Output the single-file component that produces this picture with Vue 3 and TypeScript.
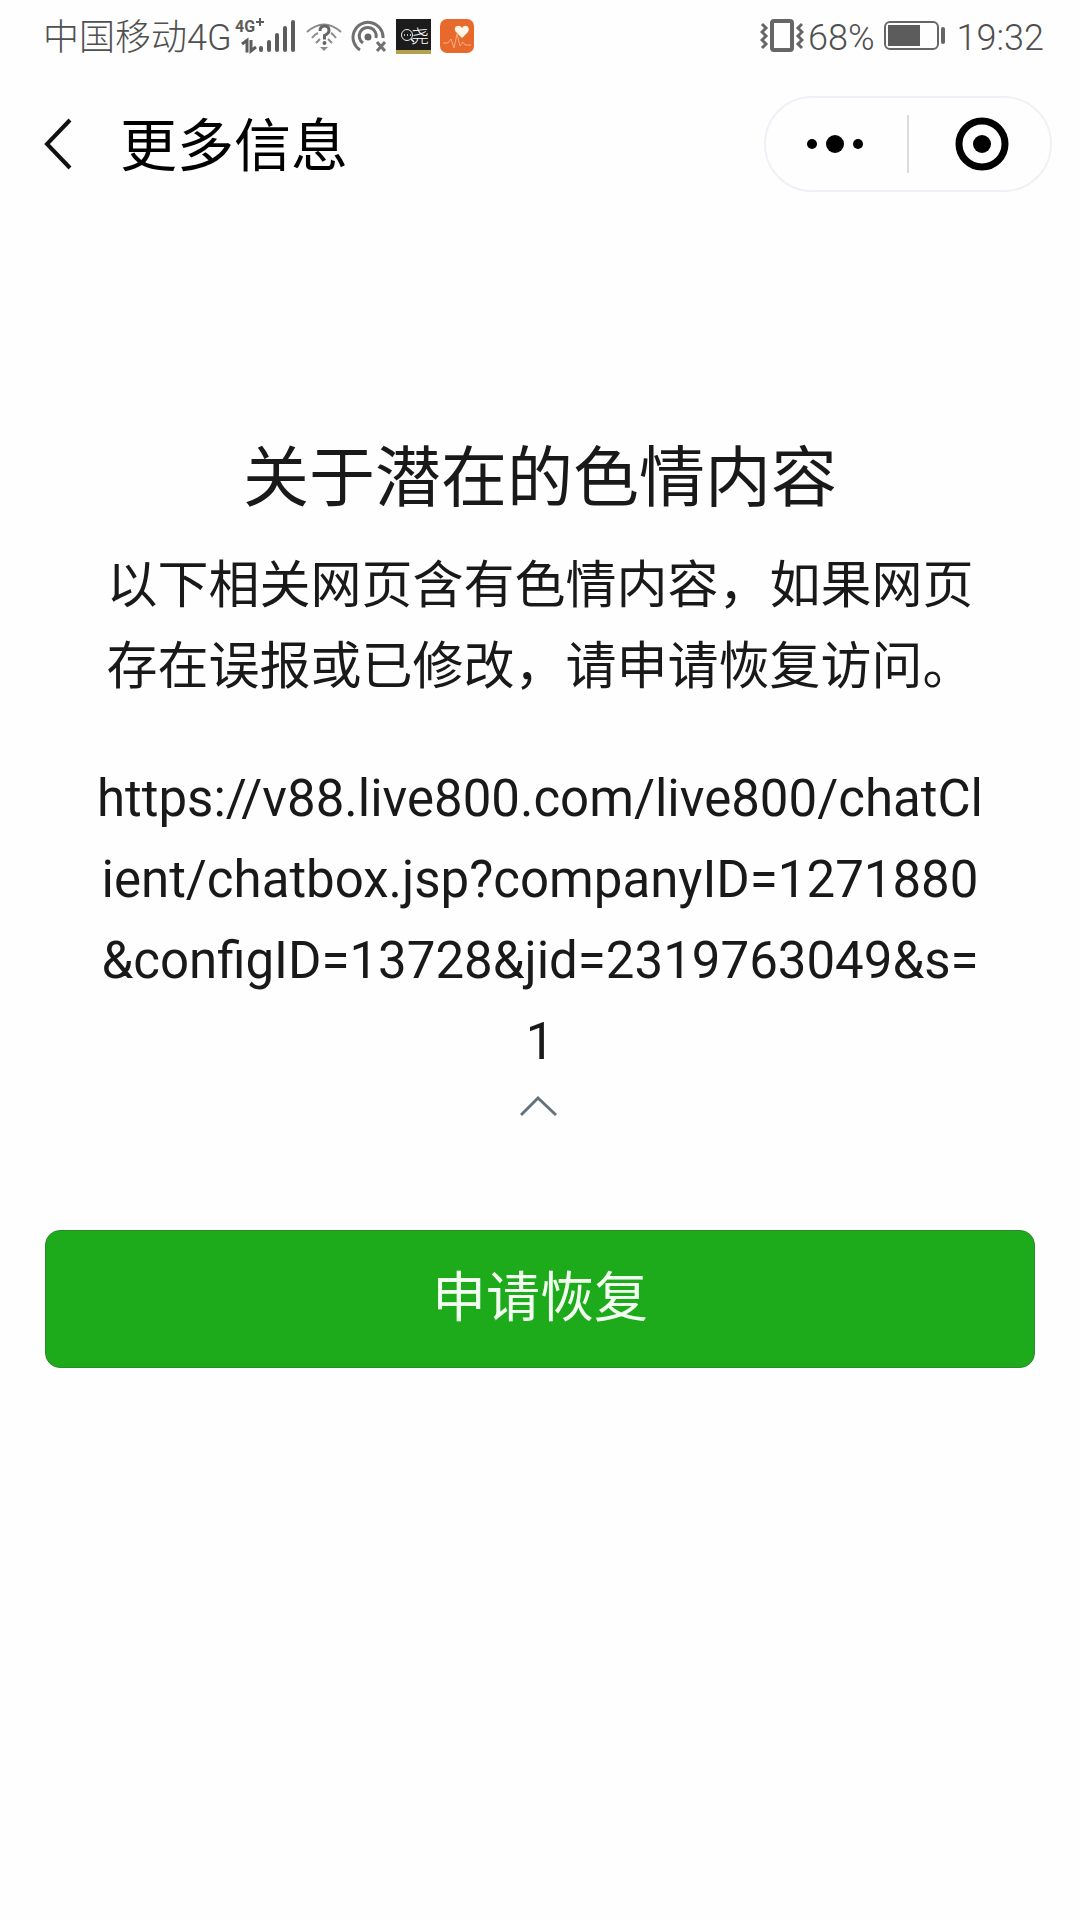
<script setup lang="ts">
import { ref } from 'vue'

const carrier = '中国移动4G'
const battery = 68
const time = '19:32'
const pageUrl =
  'https://v88.live800.com/live800/chatClient/chatbox.jsp?companyID=1271880&configID=13728&jid=2319763049&s=1'
const expanded = ref(true)
</script>

<template>
  <div class="page">
    <div class="status">
      <div class="status-left">
        <span class="carrier">{{ carrier }}</span>
        <svg class="signal" width="62" height="40" viewBox="0 0 62 40" aria-hidden="true">
          <text class="net" x="0" y="16">4G</text>
          <path d="M21 6h8M25 2v8" stroke="#5c5c5c" stroke-width="2" />
          <path d="M7 28l5-3.500v12M16 24v11l5-4" fill="none" stroke="#5c5c5c" stroke-width="3" />
          <path d="M26 32v2M34 26v8M42 19v15M50 12v22M58 6v28" stroke="#5c5c5c" stroke-width="4" stroke-linecap="round" />
        </svg>
        <svg class="icon" width="36" height="40" viewBox="0 0 36 40" fill="none" stroke="#8a8a8a" stroke-width="2" aria-hidden="true">
          <path d="M1 16Q18 1 35 16" />
          <path d="M6 22Q9 18 12 17M30 22Q27 18 25 17M10 27l4-4M26 27l-4-4" />
          <path d="M14 15q0-5 4.500-5t4.500 4.500q0 3-4.500 5v4" stroke="#666" stroke-width="3" />
          <circle cx="18.500" cy="27" r="1" fill="#666" stroke="#666" />
          <path d="M14 31h8l-4 4z" fill="#8a8a8a" stroke="none" />
        </svg>
        <svg class="icon" width="36" height="40" viewBox="0 0 36 40" fill="none" stroke="#707070" stroke-width="3" aria-hidden="true">
          <path d="M9 34A15 15 0 1 1 32 22" />
          <path d="M12 27A8.500 8.500 0 1 1 25 22" />
          <circle cx="17" cy="21" r="3.500" fill="#666" stroke="none" />
          <path d="M26 26l8 9M34 26l-8 9" />
        </svg>
        <svg class="icon" width="35" height="35" viewBox="0 0 35 35" aria-hidden="true">
          <rect width="35" height="35" fill="#1c1c1c" />
          <rect y="31" width="35" height="4" fill="#b5a04e" />
          <circle cx="11" cy="16" r="5.500" fill="none" stroke="#eee" stroke-width="1" />
          <path d="M8 16h1M11 16h1M14 16h1M15 20l3 3" stroke="#eee" stroke-width="1.500" />
          <text class="glyph" x="15" y="24">尧</text>
        </svg>
        <svg class="icon" width="34" height="34" viewBox="0 0 34 34" aria-hidden="true">
          <rect width="34" height="34" rx="7" fill="#e8692c" />
          <path d="M22 19l-6-6c-4-5 3-9 6-4 3-5 9-1 6 4z" fill="#fff6e8" />
          <path d="M3 24h5l3-4 3 9 3-14 3 12 3-4 2 3h6" fill="none" stroke="#f7ab82" stroke-width="1" />
        </svg>
      </div>
      <div class="status-right">
        <svg width="44" height="40" viewBox="0 0 44 40" fill="none" stroke="#666" stroke-width="3" aria-hidden="true">
          <rect x="12" y="5" width="20" height="29" rx="2" stroke-width="4" />
          <path d="M2 8l4 4-4 4 4 4-4 4 4 4-4 4M42 8l-4 4 4 4-4 4 4 4-4 4 4 4" />
        </svg>
        <span class="percent">{{ battery }}%</span>
        <svg class="battery" width="62" height="40" viewBox="0 0 62 40" aria-hidden="true">
          <rect x="1" y="6" width="53" height="27" rx="5" fill="none" stroke="#666" stroke-width="2" />
          <rect x="4" y="9" width="32" height="21" fill="#5c5c5c" />
          <rect x="57" y="11" width="4" height="17" rx="2" fill="#666" />
        </svg>
        <span>{{ time }}</span>
      </div>
    </div>

    <header class="nav">
      <button class="back" type="button" aria-label="返回">
        <svg width="28" height="52" viewBox="0 0 28 52" fill="none" stroke="#111" stroke-width="4">
          <path d="M26 2L3 26l23 24" />
        </svg>
      </button>
      <h1 class="nav-title">更多信息</h1>
      <div class="capsule">
        <button type="button" aria-label="更多">
          <svg width="60" height="60" viewBox="0 0 60 60">
            <circle cx="5" cy="30" r="5" />
            <circle cx="28" cy="30" r="9" />
            <circle cx="51" cy="30" r="5" />
          </svg>
        </button>
        <i class="divider"></i>
        <button type="button" aria-label="关闭">
          <svg width="60" height="60" viewBox="0 0 60 60">
            <circle cx="32" cy="30" r="23" fill="none" stroke="#000" stroke-width="7" />
            <circle cx="32" cy="30" r="9" />
          </svg>
        </button>
      </div>
    </header>

    <main class="content">
      <h2 class="title">关于潜在的色情内容</h2>
      <p class="desc">以下相关网页含有色情内容，如果网页存在误报或已修改，请申请恢复访问。</p>
      <p v-if="expanded" class="url">{{ pageUrl }}</p>
      <button class="toggle" type="button" aria-label="收起" @click="expanded = !expanded">
        <svg width="40" height="24" viewBox="0 0 40 24" fill="none" stroke="#65727c" stroke-width="3">
          <path d="M1 21L18 4l18 17" />
        </svg>
      </button>
    </main>
    <div class="actions">
      <button class="primary" type="button">申请恢复</button>
    </div>
  </div>
</template>

<style>
body {
  background: #fefefe;
}
</style>

<style scoped>
.page {
  min-height: 100vh;
  background: #fefefe;
  color: #191919;
  font-family: Roboto, 'Noto Sans CJK SC', sans-serif;
}
button {
  border: 0;
  padding: 0;
  margin: 0;
  background: none;
  font-family: inherit;
  cursor: pointer;
}
svg {
  display: block;
  flex: none;
}
.status {
  display: flex;
  justify-content: space-between;
  align-items: center;
  height: 72px;
  padding: 0 36px 0 43px;
  box-sizing: border-box;
  color: #505050;
  font-size: 36px;
  font-weight: 300;
  line-height: 40px;
  white-space: nowrap;
}
.status span {
  padding-top: 4px;
}
.status-left,
.status-right {
  display: flex;
  align-items: center;
}
.signal {
  margin-left: 3px;
}
.net {
  font: 700 16px Roboto, sans-serif;
  fill: #5c5c5c;
}
.glyph {
  font: 300 18px 'Noto Sans CJK SC', sans-serif;
  fill: #fff;
}
.icon {
  margin-left: 9px;
}
.percent {
  margin-left: 4px;
}
.battery {
  margin: 0 11px 0 9px;
}
.nav {
  display: flex;
  align-items: center;
  height: 144px;
  box-sizing: border-box;
  padding: 0 28px 0 44px;
}
.nav-title {
  flex: 1;
  margin: 0 0 0 48px;
  padding-top: 6px;
  font-size: 57px;
  font-weight: 400;
  line-height: 80px;
  color: #000;
}
.capsule {
  display: flex;
  align-items: center;
  width: 288px;
  height: 96px;
  box-sizing: border-box;
  border: 2px solid #f0f0f6;
  border-radius: 48px;
}
.capsule button {
  flex: 1;
  display: flex;
  justify-content: center;
}
.divider {
  width: 2px;
  height: 58px;
  background: #dcdcdc;
}
.content {
  display: flex;
  flex-direction: column;
  align-items: center;
  padding: 219px 95px 0;
  text-align: center;
}
.title {
  margin: 0;
  font-size: 66px;
  font-weight: 400;
  line-height: 88px;
}
.desc,
.url {
  margin: 22px 0 0;
  font-size: 51px;
  line-height: 81px;
  word-break: break-all;
}
.url {
  margin-top: 51px;
}
.toggle {
  margin-top: 12px;
}
.actions {
  padding: 112px 45px 60px;
}
.primary {
  display: block;
  width: 100%;
  height: 138px;
  border: 1px solid #2b8a2b;
  border-radius: 15px;
  background: #1dab1b;
  color: #f2fff0;
  font-size: 54px;
  line-height: 80px;
}
</style>
